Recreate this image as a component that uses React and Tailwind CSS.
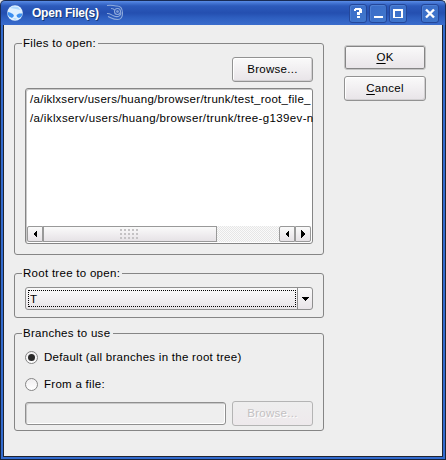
import React from 'react';

function Group({ title, className, labelClass, children }) {
  return (
    <section className={`w-[310px] rounded-[3px] border border-[#858585] px-[10px] ${className}`}>
      <h2 className={`-ml-[3px] -mt-[8px] h-[14px] whitespace-nowrap bg-[#eeeeee] pl-px leading-[14px] ${labelClass}`}>
        {title}
      </h2>
      {children}
    </section>
  );
}

function Button({ children, className = '', disabled, primary }) {
  let look =
    'border-[#929292] bg-linear-to-b from-[#fafafa] to-[#e8e4e8] shadow-[inset_1px_1px_0_#fff,inset_-1px_-1px_0_#d2d0d2]';
  if (primary) look = 'border-[#c4c4c4] bg-linear-to-b from-[#fafafa] to-[#e8e4e8] shadow-[inset_0_0_0_1px_#858585]';
  if (disabled) look = 'border-[#b4b4b4] bg-linear-to-b from-[#eeeeee] to-[#eee9ec] text-[#c3c1c2] [text-shadow:1px_1px_0_#fff]';
  return (
    <button className={`flex items-center justify-center rounded-[3px] border whitespace-pre pb-px ${look} ${className}`}>
      {children}
    </button>
  );
}

function TitleButton({ children, className = '' }) {
  return (
    <button className={`h-[19px] w-[18px] rounded-[3px] border border-[#24479a] bg-linear-to-br from-[#3a6cc8] to-[#4077cc] shadow-[inset_1px_1px_0_#4e80d4] ${className}`}>
      <svg width="16" height="17" viewBox="0 0 16 17" fill="none" shapeRendering="crispEdges">
        {children}
      </svg>
    </button>
  );
}

function TitleBar() {
  return (
    <header className="flex h-[25px] items-start rounded-t-[5px] border-x border-t border-[#182b55] bg-[linear-gradient(to_bottom,#5a8ce6_0,#4476d4_2px,#2c5abb_5px,#244fb0_12px,#2e5fc0_17px,#3a6ccc_24px)] tracking-normal">
      <svg className="ml-[6px] mt-[4px]" width="16" height="16" viewBox="0 0 16 16">
        <circle cx="8" cy="8" r="7.8" fill="#dff0ff" />
        <path d="M0.8 7L3 7.5 6 9 7 11 5 13 2 11.5 0.5 9zM9.5 10L12 8.5 15.5 8.5 14.5 11.5 12 13 10 12z" fill="#3c8ff0" />
        <path d="M3 3L6 1.5 11 2 13.5 5 9 4zM6 13L10 13.5 8 15z" fill="#aed8fc" />
      </svg>
      <h1 className="ml-[9px] mt-[4px] h-[17px] w-[68px] whitespace-nowrap text-[12px] font-bold leading-[17px] tracking-[-0.22px] text-white [text-shadow:1px_1px_0_#173873]">
        Open File(s)
      </h1>
      <svg className="ml-[6px] mt-[3px]" width="18" height="17" viewBox="0 0 18 17" fill="none" stroke="#8fabdc" strokeWidth="1.1">
        <path d="M1 1.500C5 1 8 1.500 10 2C14 1.500 16.500 4 16.500 9C16.500 13 15 15.500 11.500 15.500C7 15.500 5 13.500 2 12.500" />
        <path d="M5 4.500C7 4.500 8 5 8.500 6M1 9.500C4 9 5 11 8 12C12 13.500 15 12 15 8.500" />
        <circle cx="11.500" cy="7.500" r="3" />
        <circle cx="11.500" cy="7.500" r="0.800" />
      </svg>
      <div className="ml-auto mr-[6px] mt-[3px] flex gap-[2px]">
        <TitleButton>
          <path d="M4 4H6V6H4zM5 3H11V5H5zM9 4H12V8H9zM7 7H10V10H7zM7 11H10V13H7z" fill="#fff" />
        </TitleButton>
        <TitleButton>
          <path d="M4 11H13V13H4z" fill="#fff" />
        </TitleButton>
        <TitleButton>
          <path d="M3 4H13V13H3zM5 6V12H11V6z" fillRule="evenodd" fill="#fff" />
        </TitleButton>
        <TitleButton className="ml-[12px]">
          <path d="M4 4.500L12 12.500M12 4.500L4 12.500" stroke="#fff" strokeWidth="2.4" shapeRendering="auto" />
        </TitleButton>
      </div>
    </header>
  );
}

function Arrow({ d }) {
  return (
    <svg width="8" height="8" viewBox="0 0 8 8" shapeRendering="crispEdges">
      <path d={d} fill="#000" />
    </svg>
  );
}

const LEFT = 'M6 0V8L2 4z';
const RIGHT = 'M2 0V8L6 4z';
const DOWN = 'M0 2H8L4 6z';
const BTN = 'flex items-center justify-center border border-[#999999] bg-linear-to-b from-[#fafafa] to-[#e6e2e6]';

function ScrollBar() {
  return (
    <div className="flex h-[16px] bg-[repeating-conic-gradient(#e6e6e6_0_25%,#fafafa_0_50%)] bg-[length:2px_2px]">
      <div className={`${BTN} w-[16px] rounded-l-[2px]`}><Arrow d={LEFT} /></div>
      <div className={`${BTN} w-[174px]`}>
        <svg width="20" height="12" viewBox="0 0 20 12" shapeRendering="crispEdges">
          {[0, 1, 2].map((r) =>
            [0, 1, 2, 3, 4].map((c) => (
              <rect key={`${r}-${c}`} x={c * 4} y={1 + r * 4} width="1.5" height="1.5" fill="#c4c2c4" />
            )),
          )}
        </svg>
      </div>
      <div className={`${BTN} ml-auto w-[16px] rounded-l-[2px]`}><Arrow d={LEFT} /></div>
      <div className={`${BTN} w-[16px] rounded-r-[2px]`}><Arrow d={RIGHT} /></div>
    </div>
  );
}

function Radio({ checked, children, className }) {
  return (
    <label className={`flex h-[13px] items-center ${className}`}>
      <span className="flex size-[13px] items-center justify-center rounded-full border border-[#858585] bg-linear-to-b from-[#f0eef0] to-white">
        {checked && <span className="size-[7px] rounded-full bg-[#2a2a2a]" />}
      </span>
      <span className="ml-[6px] whitespace-nowrap pb-px leading-[12px]">{children}</span>
    </label>
  );
}

export default function App() {
  return (
    <div className="h-[460px] w-[446px] bg-[#e8e8e8] font-['Liberation_Sans',Arial,sans-serif] text-[11.5px] leading-[14px] tracking-[0.28px] text-black">
      <TitleBar />
      <div className="h-[435px] border border-t-0 border-[#182238] bg-[#326bce] px-[2px] pb-[2px]">
        <main className="flex h-full items-start border border-t-0 border-[#202430] bg-[#eeeeee] pl-[10px]">
          <div>
            <Group title="Files to open:" className="mt-[18px] h-[212px]" labelClass="w-[76px]">
              <Button className="ml-auto mt-[7px] h-[25px] w-[81px]">Browse...</Button>
              <div className="mt-[6px] flex h-[156px] w-[288px] flex-col rounded-[3px] border border-[#858585] bg-white p-px shadow-[inset_1px_1px_0_#c8c8c8]">
                <ul className="flex-1 whitespace-nowrap pl-[3px] leading-[19px]">
                  <li>/a/iklxserv/users/huang/browser/trunk/test_root_file_</li>
                  <li className="tracking-[0.36px]">/a/iklxserv/users/huang/browser/trunk/tree-g139ev-n</li>
                </ul>
                <ScrollBar />
              </div>
            </Group>
            <Group title="Root tree to open:" className="mt-[18px] h-[45px]" labelClass="w-[100px]">
              <div className="mt-[7px] flex h-[23px] w-[288px] rounded-[3px] border border-[#8f8f8f] bg-linear-to-b from-[#fafafa] to-[#e8e4e8] p-px">
                <div className="my-px ml-px w-[268px] border border-dotted border-black pl-px leading-[16px]">T</div>
                <div className="-my-px ml-px flex flex-1 items-center justify-center border-l border-[#8f8f8f]">
                  <Arrow d={DOWN} />
                </div>
              </div>
            </Group>
            <Group title="Branches to use" className="mt-[15px] h-[98px]" labelClass="w-[91px]">
              <Radio checked className="mt-[11px]">Default (all branches in the root tree)</Radio>
              <Radio className="mt-[14px]">From a file:</Radio>
              <div className="mt-[10px] flex items-center justify-between">
                <div className="h-[23px] w-[201px] rounded-[3px] border border-[#8f8f8f] shadow-[inset_1px_1px_0_#c8c8c8,inset_-1px_-1px_0_#fff]" />
                <Button disabled className="h-[25px] w-[81px]">Browse...</Button>
              </div>
            </Group>
          </div>
          <div className="ml-[20px] mt-[20px] flex flex-col gap-[6px]">
            <Button primary className="h-[25px] w-[82px]"><u className="underline-offset-2">O</u>K</Button>
            <Button className="h-[25px] w-[82px]"><u className="underline-offset-2">C</u>ancel</Button>
          </div>
        </main>
      </div>
    </div>
  );
}
